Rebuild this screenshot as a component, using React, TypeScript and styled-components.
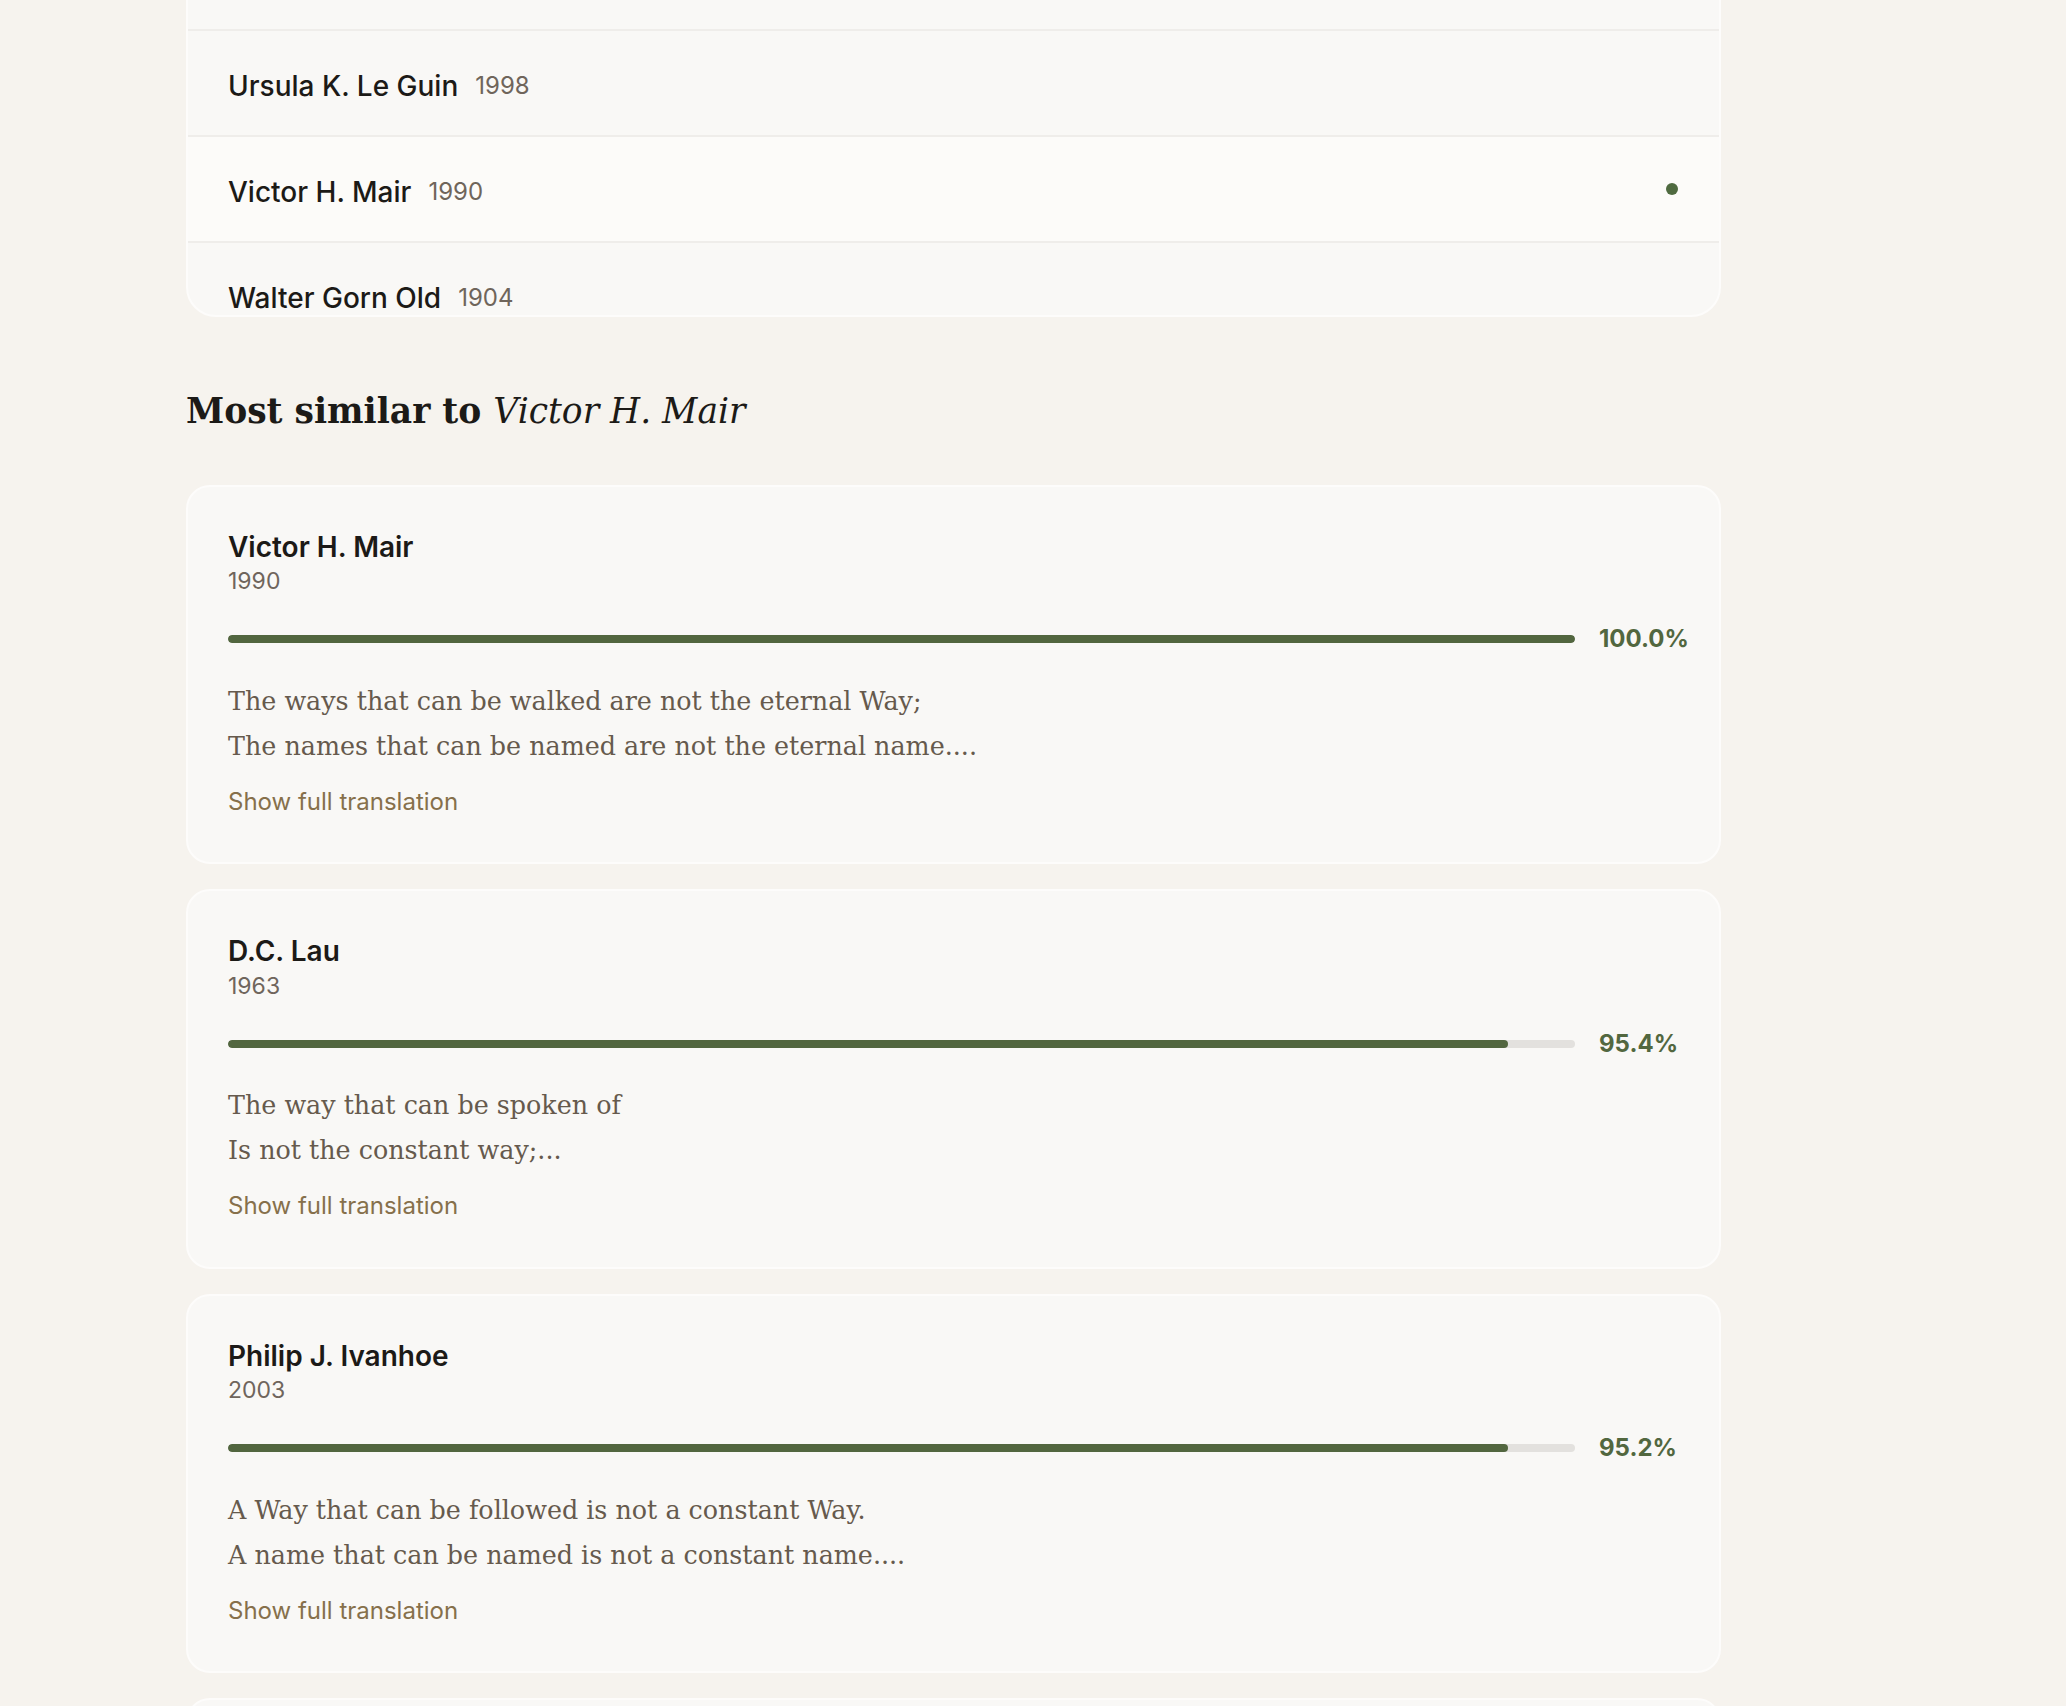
import React from 'react';
import styled, { createGlobalStyle } from 'styled-components';

const GlobalStyle = createGlobalStyle`
  html, body {
    margin: 0;
    padding: 0;
    background: #f6f3ee;
  }
  body {
    font-family: Inter, "Noto Sans", sans-serif;
    color: #1c1a17;
  }
`;

const Page = styled.div`
  min-height: 1706px;
  overflow: hidden;
`;

const Column = styled.main`
  width: 1535px;
  margin-left: 186px;
  display: flex;
  flex-direction: column;
`;

const ListCard = styled.section`
  margin-top: -79px;
  background: #f9f8f6;
  border: 2px solid #fdfcfb;
  border-radius: 30px;
  height: 392px;
  overflow: hidden;
`;

const ListRow = styled.div<{ selected?: boolean; first?: boolean }>`
  display: flex;
  align-items: center;
  gap: 17px;
  height: 106px;
  padding: 5px 41px 0 40px;
  box-sizing: border-box;
  background: ${props => (props.selected ? '#fcfbf9' : 'transparent')};
  border-top: 2px solid ${props => (props.first ? 'transparent' : '#efedea')};
`;

const ListName = styled.span`
  font-size: 28px;
  font-weight: 500;
  color: #1c1a17;
`;

const ListYear = styled.span`
  font-size: 24px;
  color: #6f655b;
  flex: 1;
`;

const Dot = styled.span`
  width: 12px;
  height: 12px;
  margin-top: -6px;
  border-radius: 50%;
  background: #4f6a40;
`;

const Heading = styled.h2`
  margin: 72px 0 0;
  font-family: "DejaVu Serif", serif;
  font-size: 34.5px;
  font-weight: 700;
  line-height: 1.3;
  color: #1c1a17;

  em {
    font-weight: 400;
  }
`;

const Results = styled.div`
  display: flex;
  flex-direction: column;
  gap: 25px;
  margin-top: 51px;
`;

const ResultCard = styled.article`
  background: #f9f8f6;
  border: 2px solid #fdfcfb;
  border-radius: 24px;
  padding: 42px 41px 45px 40px;
`;

const ResultName = styled.div`
  font-size: 28px;
  font-weight: 600;
  line-height: 1.3;
  color: #1c1a17;
`;

const ResultYear = styled.div`
  font-size: 23px;
  line-height: 1.4;
  color: #6f655c;
`;

const ScoreRow = styled.div`
  display: flex;
  align-items: center;
  gap: 24px;
  margin-top: 25px;
`;

const Track = styled.div`
  flex: 1;
  height: 8px;
  border-radius: 4px;
  background: #e3e1de;
  overflow: hidden;
`;

const Fill = styled.div`
  height: 100%;
  border-radius: 4px;
  background: #52663f;
`;

const Score = styled.span`
  width: 79px;
  font-size: 24px;
  font-weight: 700;
  line-height: 1.4;
  color: #52673f;
  white-space: nowrap;
`;

const Excerpt = styled.p`
  margin: 23px 0 0;
  font-family: "DejaVu Serif", serif;
  font-size: 25.4px;
  line-height: 45px;
  color: #665a4d;
`;

const ToggleLink = styled.button`
  display: block;
  margin-top: 17px;
  padding: 0;
  border: none;
  background: none;
  font-family: Inter, "Noto Sans", sans-serif;
  font-size: 24px;
  line-height: 1.3;
  color: #86704b;
  cursor: pointer;
`;

type Translator = { name: string; year: number; selected?: boolean };

const translators: Translator[] = [
  { name: 'Thomas Cleary', year: 1991 },
  { name: 'Ursula K. Le Guin', year: 1998 },
  { name: 'Victor H. Mair', year: 1990, selected: true },
  { name: 'Walter Gorn Old', year: 1904 },
];

type Match = { name: string; year: number; score: number; lines: string[] };

const matches: Match[] = [
  {
    name: 'Victor H. Mair',
    year: 1990,
    score: 1,
    lines: ['The ways that can be walked are not the eternal Way;', 'The names that can be named are not the eternal name....'],
  },
  {
    name: 'D.C. Lau',
    year: 1963,
    score: 0.954,
    lines: ['The way that can be spoken of', 'Is not the constant way;...'],
  },
  {
    name: 'Philip J. Ivanhoe',
    year: 2003,
    score: 0.952,
    lines: ['A Way that can be followed is not a constant Way.', 'A name that can be named is not a constant name....'],
  },
  {
    name: 'Stephen Mitchell',
    year: 1988,
    score: 0.948,
    lines: ['The tao that can be told', 'is not the eternal Tao....'],
  },
];

const App: React.FC = () => {
  return (
    <Page>
      <GlobalStyle />
      <Column>
        <ListCard>
          {translators.map((t, i) => (
            <ListRow key={t.name} selected={t.selected} first={i === 0}>
              <ListName>{t.name}</ListName>
              <ListYear>{t.year}</ListYear>
              {t.selected && <Dot />}
            </ListRow>
          ))}
        </ListCard>

        <Heading>
          Most similar to <em>Victor H. Mair</em>
        </Heading>

        <Results>
          {matches.map(m => (
            <ResultCard key={m.name}>
              <ResultName>{m.name}</ResultName>
              <ResultYear>{m.year}</ResultYear>
              <ScoreRow>
                <Track>
                  <Fill style={{ width: `${Math.round(m.score * 100)}%` }} />
                </Track>
                <Score>{(m.score * 100).toFixed(1)}%</Score>
              </ScoreRow>
              <Excerpt>
                {m.lines[0]}
                <br />
                {m.lines[1]}
              </Excerpt>
              <ToggleLink type="button">Show full translation</ToggleLink>
            </ResultCard>
          ))}
        </Results>
      </Column>
    </Page>
  );
};

export default App;
